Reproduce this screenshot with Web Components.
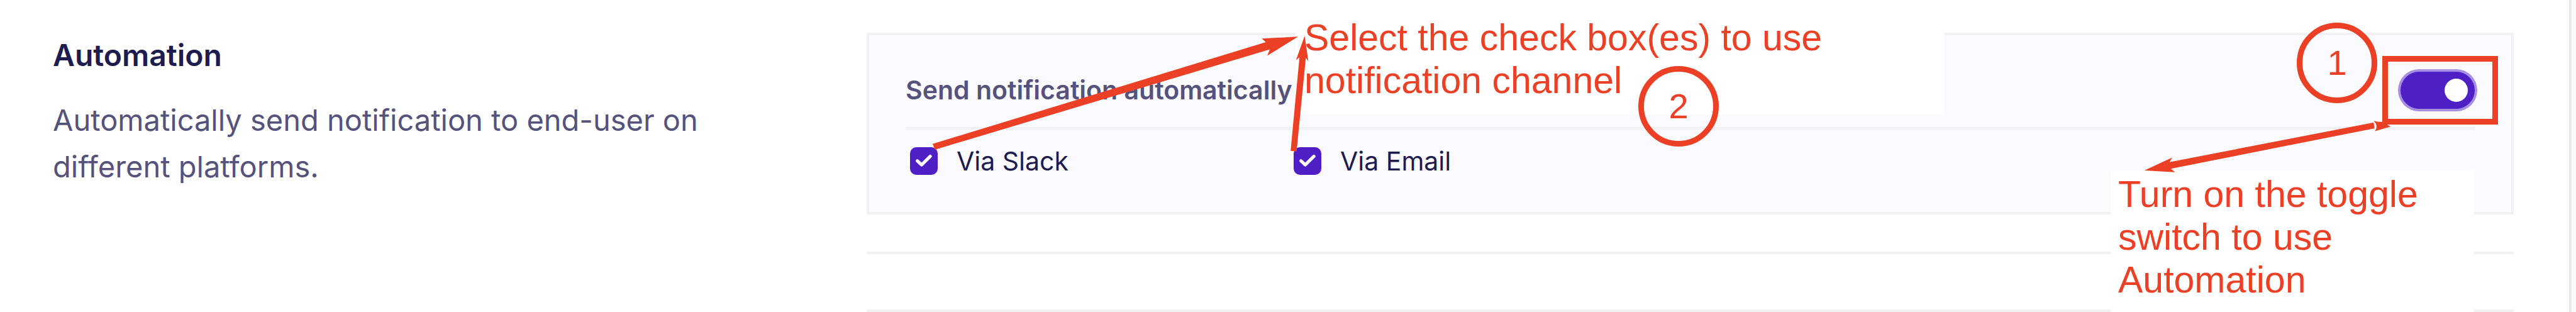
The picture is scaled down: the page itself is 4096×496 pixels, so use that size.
<!DOCTYPE html>
<html lang="en">
<head>
<meta charset="utf-8">
<title>Automation</title>
<style>
  body {
    margin: 0;
    background: #fff;
    font-family: Inter, "Liberation Sans", sans-serif;
    --ink: #1e1b4f;
    --muted: #55527c;
    --line: #f1f0f5;
    --panel: #fbfaff;
    --accent: #4e1fc4;
    --accent-soft: #a68fe2;
    --mark: #eb4025;
  }
</style>
</head>
<body>
<settings-page>
  <section-intro slot="intro" heading="Automation">Automatically send notification to end-user on different platforms.</section-intro>
  <option-card heading="Send notification automatically">
    <check-option>Via Slack</check-option>
    <check-option>Via Email</check-option>
  </option-card>
  <guide-layer slot="guide"></guide-layer>
</settings-page>

<script>
class BaseElement extends HTMLElement {
  constructor() {
    super();
    this.attachShadow({ mode: 'open' });
  }
  connectedCallback() {
    this.shadowRoot.innerHTML = this.render();
  }
}

/* Page frame: intro column, content column, edge of the scroll area */
customElements.define('settings-page', class extends BaseElement {
  render() {
    return `
      <style>
        :host { display: block; position: relative; overflow: hidden; }
        .frame { display: grid; grid-template-columns: 1294px 1fr; margin-right: 7px; padding: 52px 88px 0 84px; border-right: 4px solid #e9e9ec; box-shadow: 7px 0 #fafafa; }
        hr { height: 4px; margin: 0; border: 0; background: var(--line); }
        .first { margin-top: 59px; }
        .second { margin-top: 88px; }
      </style>
      <main class="frame">
        <slot name="intro"></slot>
        <div>
          <slot></slot>
          <hr class="first">
          <hr class="second">
        </div>
      </main>
      <slot name="guide"></slot>`;
  }
});

customElements.define('section-intro', class extends BaseElement {
  render() {
    return `
      <style>
        :host { display: block; max-width: 1120px; padding-top: 4px; font-size: 47px; }
        h2 { margin: 0 0 34px; font-size: 48px; line-height: 64px; font-weight: 600; color: var(--ink); }
        p { margin: 0; line-height: 74px; color: var(--muted); }
      </style>
      <h2>${this.getAttribute('heading')}</h2>
      <p><slot></slot></p>`;
  }
});

customElements.define('option-card', class extends BaseElement {
  render() {
    return `
      <style>
        :host { display: block; padding: 28px 58px 57px; border: 4px solid var(--line); background: var(--panel); }
        header { display: flex; align-items: center; justify-content: space-between; height: 118px; border-bottom: 4px solid var(--line); }
        h3 { margin: 0; font-size: 41px; line-height: 48px; font-weight: 600; color: var(--muted); }
        .options { display: flex; padding: 26px 0 0 7px; }
      </style>
      <header>
        <h3>${this.getAttribute('heading')}</h3>
        <toggle-switch label="${this.getAttribute('heading')}"></toggle-switch>
      </header>
      <div class="options"><slot></slot></div>`;
  }
});

customElements.define('toggle-switch', class extends BaseElement {
  render() {
    return `
      <style>
        :host { display: block; }
        input { appearance: none; display: flex; align-items: center; box-sizing: border-box; width: 118px; height: 59px; margin: 0; padding: 0 11px; border-radius: 30px; background: #cfcde0; cursor: pointer; }
        input::before { content: ""; width: 37px; height: 37px; border-radius: 50%; background: #fff; }
        input:checked { justify-content: flex-end; background: var(--accent); box-shadow: 0 0 0 4px var(--accent-soft); }
      </style>
      <input type="checkbox" role="switch" checked aria-label="${this.getAttribute('label')}">`;
  }
});

customElements.define('check-option', class extends BaseElement {
  render() {
    return `
      <style>
        :host { display: block; width: 610px; }
        label { display: flex; align-items: center; gap: 30px; font-size: 41px; line-height: 48px; color: var(--ink); cursor: pointer; }
        .box { display: grid; width: 44px; height: 44px; }
        .box > * { grid-area: 1 / 1; }
        input { appearance: none; width: 44px; height: 44px; margin: 0; border-radius: 10px; background: #dddbe8; }
        input:checked { background: var(--accent); }
        svg { width: 44px; height: 44px; pointer-events: none; }
      </style>
      <label>
        <span class="box">
          <input type="checkbox" checked>
          <svg viewBox="0 0 48 48" aria-hidden="true"><path d="M12.8 23.8 20.2 30.6 35 15.8" fill="none" stroke="#fff" stroke-width="5.6" stroke-linecap="round" stroke-linejoin="round"/></svg>
        </span>
        <span><slot></slot></span>
      </label>`;
  }
});

/* Callout text on a white plate */
customElements.define('guide-note', class extends BaseElement {
  render() {
    return `
      <style>
        :host { display: block; box-sizing: border-box; background: #fff; color: var(--mark); font: 59px/68px "Liberation Sans", Arial, sans-serif; }
      </style>
      <slot></slot>`;
  }
});

/* Ringed step number */
customElements.define('guide-step', class extends BaseElement {
  render() {
    return `
      <style>
        :host { display: flex; align-items: center; justify-content: center; box-sizing: border-box; width: 128px; height: 128px; border: 9px solid var(--mark); border-radius: 50%; color: var(--mark); font: 56px/62px "Liberation Sans", Arial, sans-serif; }
      </style>
      <slot></slot>`;
  }
});

/* Walk-through marks that float over the page */
customElements.define('guide-layer', class extends BaseElement {
  render() {
    return `
      <style>
        :host { position: absolute; inset: 0; pointer-events: none; }
        guide-note, guide-step, svg, .focus { position: absolute; }
        .channels { left: 2060px; top: 14px; width: 1032px; height: 168px; padding: 12px 14px; }
        .toggle { right: 162px; top: 271px; width: 578px; padding: 4px 12px 17px; }
        .one { right: 316px; top: 36px; }
        .two { left: 2605px; top: 105px; }
        .focus { right: 124px; top: 89px; box-sizing: border-box; width: 184px; height: 109px; border: 9px solid var(--mark); }
        svg { fill: var(--mark); }
        .to-channels { left: 1469px; top: 46px; width: 643px; height: 202px; }
        .to-toggle { right: 285px; top: 184px; width: 413px; height: 101px; }
      </style>
      <guide-note class="channels">Select the check box(es) to use<br>notification channel</guide-note>
      <guide-note class="toggle">Turn on the toggle<br>switch to use<br>Automation</guide-note>
      <svg class="to-channels" viewBox="1600 50 700 220" aria-hidden="true">
        <path d="M1615 249 2192 73 2185 66.5 2248 63.4 2194.5 96.4 2199 85.4 1619 259Z"/>
        <path d="M2235 261 2250.3 99.3 2244.3 104 2259.3 62 2265.7 106 2261.3 100 2245.3 262Z"/>
      </svg>
      <div class="focus"></div>
      <svg class="to-toggle" viewBox="3700 200 450 110" aria-hidden="true">
        <path d="M3712.7 294.7 3761 272.3 3756.3 280.3 4110 211.7 4111.7 221.7 3758.7 291.7 3766 297.7Z"/>
        <path fill="#fff" d="M4110 209 4117 214 4117 222 4112.5 226 4111.7 221.7 4110 211.7Z"/>
        <path d="M4110 208.7Q4117 211 4125 210.7L4139.3 218.7 4112.3 226.7Q4119 218 4110 208.7Z"/>
      </svg>
      <guide-step class="one">1</guide-step>
      <guide-step class="two">2</guide-step>`;
  }
});
</script>
</body>
</html>
